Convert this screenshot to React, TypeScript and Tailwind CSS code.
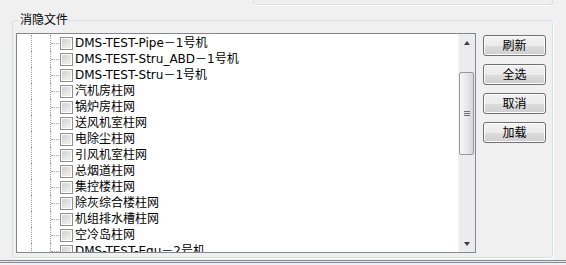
import { useState } from 'react'

const rows = [
  'DMS-TEST-Pipe－1号机',
  'DMS-TEST-Stru_ABD－1号机',
  'DMS-TEST-Stru－1号机',
  '汽机房柱网',
  '锅炉房柱网',
  '送风机室柱网',
  '电除尘柱网',
  '引风机室柱网',
  '总烟道柱网',
  '集控楼柱网',
  '除灰综合楼柱网',
  '机组排水槽柱网',
  '空冷岛柱网',
  'DMS-TEST-Equ－2号机',
]

const buttons = ['刷新', '全选', '取消', '加载']

function TreeRow({ label }: { label: string }) {
  const [checked, setChecked] = useState(false)
  return (
    <div className="flex h-[16px] items-center">
      <div className="w-[14px] shrink-0" />
      <div className="h-full w-[19px] shrink-0 border-l border-dotted border-[#a0a0a0]" />
      <div className="flex h-full w-[9px] shrink-0 items-center border-l border-dotted border-[#a0a0a0]">
        <div className="w-[8px] border-t border-dotted border-[#a0a0a0]" />
      </div>
      {/* checkbox */}
      <button
        onClick={() => setChecked(c => !c)}
        className="ml-[1px] h-[13px] w-[13px] shrink-0 border border-[#8f8f8f] bg-white p-[1px]"
      >
        <div className="flex h-full w-full items-center justify-center bg-[linear-gradient(135deg,#cfd0d1,#f4f4f4)] text-[9px] leading-none">
          {checked ? '✓' : ''}
        </div>
      </button>
      <span className="ml-[2px] whitespace-nowrap text-[12px] leading-[16px] text-black">{label}</span>
    </div>
  )
}

function Scrollbar() {
  return (
    <div className="flex w-[17px] shrink-0 flex-col bg-[#ececec] border-l border-[#f4f4f4]">
      <div className="flex h-[17px] items-center justify-center">
        <div className="h-0 w-0 border-x-[3.5px] border-b-[4px] border-x-transparent border-b-[#404040]" />
      </div>
      <div className="mt-[21px] ml-[0px] flex h-[83px] w-[15px] flex-col items-center justify-center gap-[1px] rounded-[2px] border border-[#989898] bg-[linear-gradient(90deg,#f6f6f6,#e6e6e6_60%,#d6d6d6)]">
        <div className="h-[1px] w-[6px] bg-[#6f6f6f]" />
        <div className="h-[1px] w-[6px] bg-[#6f6f6f]" />
        <div className="h-[1px] w-[6px] bg-[#6f6f6f]" />
      </div>
      <div className="flex-1" />
      <div className="flex h-[17px] items-center justify-center">
        <div className="h-0 w-0 border-x-[3.5px] border-t-[4px] border-x-transparent border-t-[#404040]" />
      </div>
    </div>
  )
}

export default function App() {
  return (
    <div
      className="flex h-[265px] w-[566px] flex-col overflow-hidden bg-[#f0f0f0]"
      style={{ fontFamily: '"DejaVu Sans", "Noto Sans CJK SC", sans-serif' }}
    >
      {/* bottom edge of the panel above */}
      <div className="ml-[253px] h-[5px] w-[300px] shrink-0 rounded-b-[3px] border-x border-b border-[#d5dfe5] shadow-[0_1px_0_#ffffff]" />

      {/* 消隐文件 group */}
      <div className="relative ml-[12px] mt-[15px] flex h-[238px] w-[541px] shrink-0 rounded-[3px] border border-[#d5dfe5] pl-[3px] pt-[12px] shadow-[1px_1px_0_#ffffff]">
        <span className="absolute left-[6px] top-[-8px] bg-[#f0f0f0] px-[1px] text-[12px] leading-[14px] text-black">
          消隐文件
        </span>

        <div className="flex h-[220px] w-[460px] shrink-0 border border-[#828790] bg-white">
          <div className="flex-1 overflow-hidden pt-[1px]">
            {rows.map(r => (
              <TreeRow key={r} label={r} />
            ))}
          </div>
          <Scrollbar />
        </div>

        <div className="ml-[7px] mt-[2px] flex flex-col gap-[8px]">
          {buttons.map(b => (
            <button
              key={b}
              className="flex h-[21px] w-[63px] items-center justify-center rounded-[3px] border border-[#707070] bg-[linear-gradient(#f2f2f2_0%,#ebebeb_50%,#dddddd_50%,#cfcfcf_100%)] text-[12px] leading-none text-black shadow-[inset_0_0_0_1px_#fcfcfc]"
            >
              {b}
            </button>
          ))}
        </div>
      </div>

      {/* splitter lines below */}
      <div className="mt-[2px] h-[1px] w-full shrink-0 bg-[#858a93]" />
      <div className="h-[1px] w-full shrink-0 bg-[#e6e6e6]" />
      <div className="h-[1px] w-full shrink-0 bg-[#858a93]" />
      <div className="flex-1" />
    </div>
  )
}
